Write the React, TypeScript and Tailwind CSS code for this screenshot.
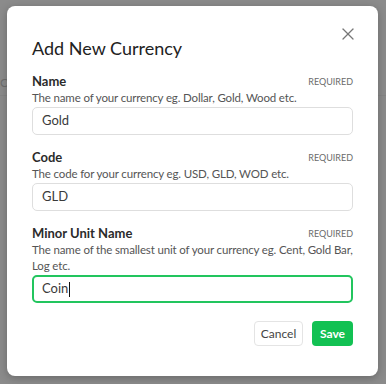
import { X } from "lucide-react";

// ── One labelled form field inside the dialog
function Field({
  label,
  hint,
  value,
  focused,
}: {
  label: string;
  hint: string;
  value: string;
  focused?: boolean;
}) {
  return (
    <div className="flex flex-col">
      <div className="flex items-center justify-between h-[16px]">
        <span className="text-[13px] font-bold text-[#2b2b2b]">{label}</span>
        <span className="text-[9px] text-[#6b6b6b]">REQUIRED</span>
      </div>
      <p className="text-[11.5px] leading-[16px] tracking-[-0.15px] text-[#555]">{hint}</p>
      <div
        className={`mt-[1px] flex items-center rounded-[5px] bg-white ${
          focused
            ? "h-[28px] border-2 border-[#22c55e] px-[8px]"
            : "h-[28px] border border-[#dedede] px-[9px]"
        }`}
      >
        <span className="text-[13px] text-[#3a3a3a]">{value}</span>
        {focused && <span className="w-px h-[15px] bg-[#111] ml-px" />}
      </div>
    </div>
  );
}

export default function App() {
  return (
    <div
      className="relative w-[386px] h-[384px] overflow-hidden bg-[#8b8b8b]"
      style={{ fontFamily: "Lato, 'Open Sans', sans-serif" }}
    >
      {/* ── Page behind the overlay */}
      <div className="pt-[74px]">
        <div className="text-[12px] text-[#6e6e6e]">Cu</div>
        <div className="mt-[3px] h-px bg-[#858585]" />
      </div>

      {/* ── Dialog */}
      <div className="absolute left-[7px] top-[6px] w-[371px] h-[370px] bg-white rounded-[8px] shadow-[0_2px_8px_rgba(0,0,0,0.25)] px-[25px] pt-[30px]">
        <button className="absolute right-[20px] top-[18px] text-[#777]">
          <X size={20} strokeWidth={1.5} />
        </button>

        <h2 className="text-[18px] leading-[24px] text-[#222]">Add New Currency</h2>

        <div className="mt-[14px] flex flex-col gap-[15px]">
          <Field
            label="Name"
            hint="The name of your currency eg. Dollar, Gold, Wood etc."
            value="Gold"
          />
          <Field
            label="Code"
            hint="The code for your currency eg. USD, GLD, WOD etc."
            value="GLD"
          />
          <Field
            label="Minor Unit Name"
            hint="The name of the smallest unit of your currency eg. Cent, Gold Bar, Log etc."
            value="Coin"
            focused
          />
        </div>

        <div className="mt-[18px] flex justify-end gap-[9px]">
          <button className="h-[25px] w-[49px] rounded-[4px] border border-[#e4e4e4] text-[12px] text-[#444] bg-white">
            Cancel
          </button>
          <button className="h-[25px] w-[41px] rounded-[4px] bg-[#12c153] text-[12px] font-bold text-white">
            Save
          </button>
        </div>
      </div>
    </div>
  );
}
